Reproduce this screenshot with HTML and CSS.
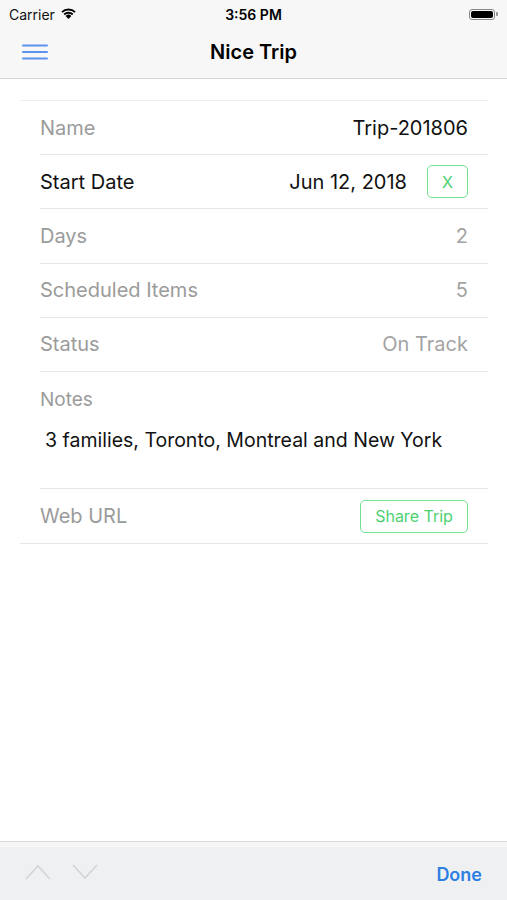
FILE: index.html
```html
<!DOCTYPE html>
<html lang="en">
<head>
    <meta charset="UTF-8">
    <meta name="viewport" content="width=device-width, initial-scale=1.0">
    <title>Nice Trip</title>
    <link rel="stylesheet" href="styles.css">
</head>
<body>
    <div class="screen">
        <div class="top-bar">
            <div class="status-bar">
                <div class="carrier">
                    Carrier
                    <svg class="wifi" width="17" height="12" viewBox="0 0 17 12">
                        <path d="M8.5 12 L5.6 8.9 A4.2 4.2 0 0 1 11.4 8.9 Z" fill="#000"/>
                        <path d="M3.6 6.8 A7 7 0 0 1 13.4 6.8 L12.1 8.2 A5.2 5.2 0 0 0 4.9 8.2 Z" fill="#000"/>
                        <path d="M1.3 4.4 A10.3 10.3 0 0 1 15.7 4.4 L14.4 5.8 A8.4 8.4 0 0 0 2.6 5.8 Z" fill="#000"/>
                    </svg>
                </div>
                <div class="clock">3:56 PM</div>
                <div class="battery">
                    <span class="battery-body"><span class="battery-level"></span></span>
                    <span class="battery-tip"></span>
                </div>
            </div>
            <div class="nav-bar">
                <button class="menu-btn" aria-label="Menu">
                    <svg width="26" height="16" viewBox="0 0 26 16">
                        <rect x="0" y="0.5" width="26" height="2" rx="1" fill="#5b93ee"/>
                        <rect x="0" y="7" width="26" height="2" rx="1" fill="#5b93ee"/>
                        <rect x="0" y="13.5" width="26" height="2" rx="1" fill="#5b93ee"/>
                    </svg>
                </button>
                <h1>Nice Trip</h1>
            </div>
        </div>

        <div class="content">
            <div class="form-table">
                <div class="row">
                    <span class="label">Name</span>
                    <span class="value">Trip-201806</span>
                </div>
                <div class="row">
                    <span class="label dark">Start Date</span>
                    <span class="value">Jun 12, 2018</span>
                    <button class="outline-btn clear-btn">X</button>
                </div>
                <div class="row">
                    <span class="label">Days</span>
                    <span class="value muted">2</span>
                </div>
                <div class="row">
                    <span class="label">Scheduled Items</span>
                    <span class="value muted">5</span>
                </div>
                <div class="row">
                    <span class="label">Status</span>
                    <span class="value muted">On Track</span>
                </div>
                <div class="notes">
                    <span class="label">Notes</span>
                    <p class="notes-text">3 families, Toronto, Montreal and New York</p>
                </div>
                <div class="row last">
                    <span class="label">Web URL</span>
                    <button class="outline-btn share-btn">Share Trip</button>
                </div>
            </div>
        </div>

        <div class="toolbar">
            <div class="arrows">
                <svg width="26" height="16" viewBox="0 0 26 16">
                    <path d="M1 15 L13 2 L25 15" fill="none" stroke="#d3d4d6" stroke-width="1.6"/>
                </svg>
                <svg width="26" height="16" viewBox="0 0 26 16">
                    <path d="M1 1 L13 14 L25 1" fill="none" stroke="#d3d4d6" stroke-width="1.6"/>
                </svg>
            </div>
            <button class="done-btn">Done</button>
        </div>
    </div>
</body>
</html>
```

FILE: styles.css
```css
body {
    margin: 0;
    font-family: Inter, 'Liberation Sans', Arial, sans-serif;
    background-color: #fff;
    color: #000;
}
.screen {
    width: 507px;
    height: 900px;
    display: flex;
    flex-direction: column;
    overflow: hidden;
}
.top-bar {
    background-color: #f7f7f7;
    border-bottom: 1px solid #d6d6d8;
    height: 79px;
    box-sizing: border-box;
}
.status-bar {
    height: 28px;
    display: flex;
    align-items: center;
    justify-content: space-between;
    padding: 0 9px;
    font-size: 14px;
    position: relative;
}
.carrier {
    display: flex;
    align-items: center;
    gap: 5px;
    color: #111;
}
.wifi {
    margin-top: -3px;
}
.clock {
    position: absolute;
    left: 0;
    right: 0;
    text-align: center;
    font-weight: 600;
    pointer-events: none;
}
.battery {
    display: flex;
    align-items: center;
}
.battery-body {
    width: 26px;
    height: 11px;
    border: 1px solid #888;
    border-radius: 3px;
    padding: 1px;
    box-sizing: border-box;
    display: flex;
}
.battery-level {
    flex: 1;
    background-color: #000;
    border-radius: 2px;
}
.battery-tip {
    width: 2px;
    height: 4px;
    background-color: #999;
    border-radius: 0 1px 1px 0;
    margin-left: 1px;
}
.nav-bar {
    height: 50px;
    display: flex;
    align-items: center;
    position: relative;
}
.menu-btn {
    background: none;
    border: none;
    padding: 0;
    margin-left: 22px;
    margin-top: -3px;
    display: flex;
    z-index: 1;
}
.nav-bar h1 {
    position: absolute;
    left: 0;
    right: 0;
    margin: 0;
    margin-top: -2px;
    text-align: center;
    font-size: 20px;
    font-weight: 600;
    color: #000;
}
.content {
    flex: 1;
    padding: 21px 19px 0 20px;
}
.form-table {
    border-top: 1px solid #efefef;
    border-bottom: 1px solid #e6e6e6;
}
.row {
    height: 54.2px;
    margin-left: 20px;
    padding-right: 20px;
    display: flex;
    align-items: center;
    border-bottom: 1px solid #e6e6e6;
    box-sizing: border-box;
    font-size: 20px;
}
.row.last {
    border-bottom: none;
}
.label {
    color: #9b9b9b;
    flex: 1;
}
.label.dark {
    color: #111;
}
.value {
    color: #111;
}
.value.muted {
    color: #a3a3a3;
}
.outline-btn {
    background: #fff;
    border: 1.5px solid #6ee08f;
    border-radius: 5px;
    color: #4cd170;
    font-family: inherit;
    cursor: pointer;
}
.clear-btn {
    width: 41px;
    height: 33px;
    margin-left: 20px;
    font-size: 16px;
    padding: 0;
}
.share-btn {
    width: 108px;
    height: 33px;
    font-size: 16px;
    padding: 0;
}
.notes {
    margin-left: 20px;
    height: 117px;
    border-bottom: 1px solid #e6e6e6;
    box-sizing: border-box;
    padding-top: 16px;
}
.notes .label {
    display: block;
    font-size: 19px;
}
.notes-text {
    margin: 17px 0 0 5px;
    font-size: 19.5px;
    color: #111;
}
.toolbar {
    height: 59px;
    border-top: 1px solid #d9d9db;
    box-shadow: inset 0 5px 0 #f6f6f7;
    background-color: #eff0f2;
    display: flex;
    align-items: center;
    justify-content: space-between;
    padding: 6px 25px 0 25px;
    box-sizing: border-box;
}
.arrows {
    display: flex;
    gap: 21px;
    margin-top: -4px;
}
.done-btn {
    background: none;
    border: none;
    padding: 0;
    color: #2d7fe2;
    font-family: inherit;
    font-size: 18px;
    font-weight: 600;
}
```
